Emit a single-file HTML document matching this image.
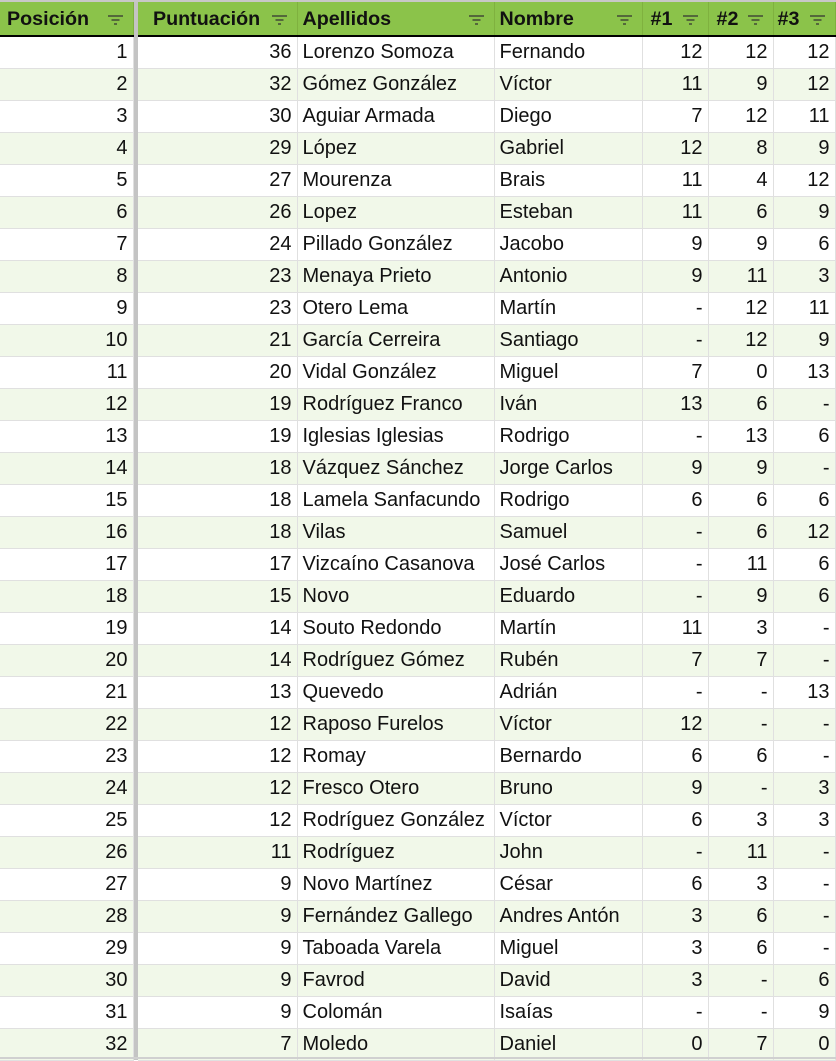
<!DOCTYPE html>
<html><head><meta charset="utf-8"><style>
*{margin:0;padding:0;box-sizing:border-box}
body{width:836px;height:1059px;overflow:hidden;background:#fff;font-family:"Liberation Sans",Arial,sans-serif;position:relative}
.top{position:absolute;left:0;top:0;width:836px;height:2px;background:#c8c8c8}
table{position:absolute;left:0;top:2px;border-collapse:collapse;table-layout:fixed}
td,th{height:32px;border-right:1px solid #e0e0e0;border-bottom:1px solid #e0e0e0;font-size:20px;color:#111;white-space:nowrap;overflow:hidden;padding:0 5px}
th{background:#8bc34a;font-weight:bold;text-align:left;font-size:19.7px;border-bottom:2px solid #000;border-right:1px solid #7fb13f;position:relative;height:34px;padding-top:2px}
th svg{position:absolute;right:9px;top:12px}
td.n{text-align:right}
tr:nth-child(even) td{background:#f1f8e9}
td.sep,th.sep{width:5px;padding:0;background:#c4c4c4!important;border:none}
.bot{position:absolute;left:0;top:1057px;width:836px;height:2px;background:#d0d0d0}
</style></head><body>
<div class="top"></div>
<table>
<colgroup><col style="width:133px"><col style="width:5px"><col style="width:159px"><col style="width:197px"><col style="width:148px"><col style="width:66px"><col style="width:65px"><col style="width:62px"></colgroup>
<thead><tr>
<th style="padding-left:7px">Posición<svg width="17" height="12"><path d="M1 2h15M4.5 6h8M7 10h3" stroke="#333" stroke-width="1.3"/></svg></th>
<th class="sep"></th>
<th style="padding-left:15px">Puntuación<svg width="17" height="12"><path d="M1 2h15M4.5 6h8M7 10h3" stroke="#333" stroke-width="1.3"/></svg></th>
<th>Apellidos<svg width="17" height="12"><path d="M1 2h15M4.5 6h8M7 10h3" stroke="#333" stroke-width="1.3"/></svg></th>
<th>Nombre<svg width="17" height="12"><path d="M1 2h15M4.5 6h8M7 10h3" stroke="#333" stroke-width="1.3"/></svg></th>
<th style="padding-left:8px">#1<svg width="17" height="12"><path d="M1 2h15M4.5 6h8M7 10h3" stroke="#333" stroke-width="1.3"/></svg></th>
<th style="padding-left:8px">#2<svg width="17" height="12"><path d="M1 2h15M4.5 6h8M7 10h3" stroke="#333" stroke-width="1.3"/></svg></th>
<th style="padding-left:4px">#3<svg width="17" height="12"><path d="M1 2h15M4.5 6h8M7 10h3" stroke="#333" stroke-width="1.3"/></svg></th>
</tr></thead>
<tbody>
<tr><td class="n">1</td><td class="sep"></td><td class="n">36</td><td>Lorenzo Somoza</td><td>Fernando</td><td class="n">12</td><td class="n">12</td><td class="n">12</td></tr>
<tr><td class="n">2</td><td class="sep"></td><td class="n">32</td><td>Gómez González</td><td>Víctor</td><td class="n">11</td><td class="n">9</td><td class="n">12</td></tr>
<tr><td class="n">3</td><td class="sep"></td><td class="n">30</td><td>Aguiar Armada</td><td>Diego</td><td class="n">7</td><td class="n">12</td><td class="n">11</td></tr>
<tr><td class="n">4</td><td class="sep"></td><td class="n">29</td><td>López</td><td>Gabriel</td><td class="n">12</td><td class="n">8</td><td class="n">9</td></tr>
<tr><td class="n">5</td><td class="sep"></td><td class="n">27</td><td>Mourenza</td><td>Brais</td><td class="n">11</td><td class="n">4</td><td class="n">12</td></tr>
<tr><td class="n">6</td><td class="sep"></td><td class="n">26</td><td>Lopez</td><td>Esteban</td><td class="n">11</td><td class="n">6</td><td class="n">9</td></tr>
<tr><td class="n">7</td><td class="sep"></td><td class="n">24</td><td>Pillado González</td><td>Jacobo</td><td class="n">9</td><td class="n">9</td><td class="n">6</td></tr>
<tr><td class="n">8</td><td class="sep"></td><td class="n">23</td><td>Menaya Prieto</td><td>Antonio</td><td class="n">9</td><td class="n">11</td><td class="n">3</td></tr>
<tr><td class="n">9</td><td class="sep"></td><td class="n">23</td><td>Otero Lema</td><td>Martín</td><td class="n">-</td><td class="n">12</td><td class="n">11</td></tr>
<tr><td class="n">10</td><td class="sep"></td><td class="n">21</td><td>García Cerreira</td><td>Santiago</td><td class="n">-</td><td class="n">12</td><td class="n">9</td></tr>
<tr><td class="n">11</td><td class="sep"></td><td class="n">20</td><td>Vidal González</td><td>Miguel</td><td class="n">7</td><td class="n">0</td><td class="n">13</td></tr>
<tr><td class="n">12</td><td class="sep"></td><td class="n">19</td><td>Rodríguez Franco</td><td>Iván</td><td class="n">13</td><td class="n">6</td><td class="n">-</td></tr>
<tr><td class="n">13</td><td class="sep"></td><td class="n">19</td><td>Iglesias Iglesias</td><td>Rodrigo</td><td class="n">-</td><td class="n">13</td><td class="n">6</td></tr>
<tr><td class="n">14</td><td class="sep"></td><td class="n">18</td><td>Vázquez Sánchez</td><td>Jorge Carlos</td><td class="n">9</td><td class="n">9</td><td class="n">-</td></tr>
<tr><td class="n">15</td><td class="sep"></td><td class="n">18</td><td>Lamela Sanfacundo</td><td>Rodrigo</td><td class="n">6</td><td class="n">6</td><td class="n">6</td></tr>
<tr><td class="n">16</td><td class="sep"></td><td class="n">18</td><td>Vilas</td><td>Samuel</td><td class="n">-</td><td class="n">6</td><td class="n">12</td></tr>
<tr><td class="n">17</td><td class="sep"></td><td class="n">17</td><td>Vizcaíno Casanova</td><td>José Carlos</td><td class="n">-</td><td class="n">11</td><td class="n">6</td></tr>
<tr><td class="n">18</td><td class="sep"></td><td class="n">15</td><td>Novo</td><td>Eduardo</td><td class="n">-</td><td class="n">9</td><td class="n">6</td></tr>
<tr><td class="n">19</td><td class="sep"></td><td class="n">14</td><td>Souto Redondo</td><td>Martín</td><td class="n">11</td><td class="n">3</td><td class="n">-</td></tr>
<tr><td class="n">20</td><td class="sep"></td><td class="n">14</td><td>Rodríguez Gómez</td><td>Rubén</td><td class="n">7</td><td class="n">7</td><td class="n">-</td></tr>
<tr><td class="n">21</td><td class="sep"></td><td class="n">13</td><td>Quevedo</td><td>Adrián</td><td class="n">-</td><td class="n">-</td><td class="n">13</td></tr>
<tr><td class="n">22</td><td class="sep"></td><td class="n">12</td><td>Raposo Furelos</td><td>Víctor</td><td class="n">12</td><td class="n">-</td><td class="n">-</td></tr>
<tr><td class="n">23</td><td class="sep"></td><td class="n">12</td><td>Romay</td><td>Bernardo</td><td class="n">6</td><td class="n">6</td><td class="n">-</td></tr>
<tr><td class="n">24</td><td class="sep"></td><td class="n">12</td><td>Fresco Otero</td><td>Bruno</td><td class="n">9</td><td class="n">-</td><td class="n">3</td></tr>
<tr><td class="n">25</td><td class="sep"></td><td class="n">12</td><td>Rodríguez González</td><td>Víctor</td><td class="n">6</td><td class="n">3</td><td class="n">3</td></tr>
<tr><td class="n">26</td><td class="sep"></td><td class="n">11</td><td>Rodríguez</td><td>John</td><td class="n">-</td><td class="n">11</td><td class="n">-</td></tr>
<tr><td class="n">27</td><td class="sep"></td><td class="n">9</td><td>Novo Martínez</td><td>César</td><td class="n">6</td><td class="n">3</td><td class="n">-</td></tr>
<tr><td class="n">28</td><td class="sep"></td><td class="n">9</td><td>Fernández Gallego</td><td>Andres Antón</td><td class="n">3</td><td class="n">6</td><td class="n">-</td></tr>
<tr><td class="n">29</td><td class="sep"></td><td class="n">9</td><td>Taboada Varela</td><td>Miguel</td><td class="n">3</td><td class="n">6</td><td class="n">-</td></tr>
<tr><td class="n">30</td><td class="sep"></td><td class="n">9</td><td>Favrod</td><td>David</td><td class="n">3</td><td class="n">-</td><td class="n">6</td></tr>
<tr><td class="n">31</td><td class="sep"></td><td class="n">9</td><td>Colomán</td><td>Isaías</td><td class="n">-</td><td class="n">-</td><td class="n">9</td></tr>
<tr><td class="n">32</td><td class="sep"></td><td class="n">7</td><td>Moledo</td><td>Daniel</td><td class="n">0</td><td class="n">7</td><td class="n">0</td></tr>
</tbody></table>
<div class="bot"></div>
</body></html>
